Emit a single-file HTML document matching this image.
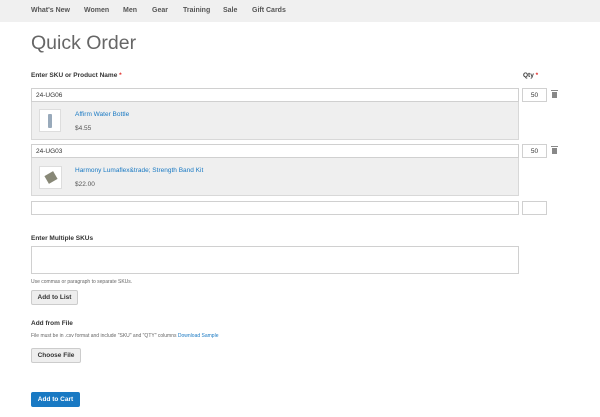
<!DOCTYPE html><html><head><style>
*{box-sizing:border-box;margin:0;padding:0}
body{width:600px;height:417px;background:#fff;font-family:"Liberation Sans",sans-serif;color:#333;position:relative;overflow:hidden}
.a{position:absolute}
.nav{left:0;top:0;width:600px;height:22px;background:#f0f0f0}
.nav span{position:absolute;top:7px;font-size:7px;font-weight:bold;color:#555}
.lbl{font-size:6.5px;font-weight:bold;color:#333}
.in{border:1px solid #d0d0d0;background:#fff;font-size:6.5px;padding-left:4px;line-height:12px}
.box{background:#efefef;border:1px solid #d8d8d8;border-top:none}
.img{background:#fff;border:1px solid #ddd}
.lnk{font-size:6.5px;color:#1979c3}
.pr{font-size:6.5px;color:#555}
.btn{background:#eee;border:1px solid #ccc;border-radius:2px;font-size:6.5px;font-weight:bold;color:#333;text-align:center;line-height:13px}
.star{color:#e02b27}
.tr{position:absolute;width:7px;height:9px}
.tr:before{content:"";position:absolute;left:0;top:1px;width:7px;height:1px;background:#888}
.tr:after{content:"";position:absolute;left:1px;top:3px;width:5px;height:6px;background:#888}
</style></head><body>
<div class="a nav"><span style="left:31px">What's New</span><span style="left:84px">Women</span><span style="left:123px">Men</span><span style="left:152px">Gear</span><span style="left:183px">Training</span><span style="left:223px">Sale</span><span style="left:252px">Gift Cards</span></div>
<div class="a" style="left:31px;top:32px;font-size:19.5px;color:#666">Quick Order</div>
<div class="a lbl" style="left:31px;top:72px">Enter SKU or Product Name <span class="star">*</span></div>
<div class="a lbl" style="left:523px;top:72px">Qty <span class="star">*</span></div>

<div class="a in" style="left:31px;top:88px;width:488px;height:14px;line-height:13px">24-UG06</div>
<div class="a in" style="left:522px;top:88px;width:25px;height:14px;text-align:center;padding:0;line-height:13px">50</div>
<div class="tr" style="left:551px;top:89px"></div>
<div class="a box" style="left:31px;top:102px;width:488px;height:38px"></div>
<div class="a img" style="left:39px;top:109px;width:22px;height:23px"><div style="margin:4px auto;width:4px;height:14px;background:#9ab;border-radius:1px"></div></div>
<div class="a lnk" style="left:75px;top:111px">Affirm Water Bottle</div>
<div class="a pr" style="left:75px;top:125px">$4.55</div>

<div class="a in" style="left:31px;top:144px;width:488px;height:14px;line-height:13px">24-UG03</div>
<div class="a in" style="left:522px;top:144px;width:25px;height:14px;text-align:center;padding:0;line-height:13px">50</div>
<div class="tr" style="left:551px;top:145px"></div>
<div class="a box" style="left:31px;top:158px;width:488px;height:38px"></div>
<div class="a img" style="left:39px;top:166px;width:23px;height:23px"><div style="margin:6px auto;width:10px;height:9px;background:#887;transform:rotate(-30deg)"></div></div>
<div class="a lnk" style="left:75px;top:167px">Harmony Lumaflex&amp;trade; Strength Band Kit</div>
<div class="a pr" style="left:75px;top:181px">$22.00</div>

<div class="a in" style="left:31px;top:201px;width:488px;height:14px"></div>
<div class="a in" style="left:522px;top:201px;width:25px;height:14px"></div>

<div class="a lbl" style="left:31px;top:235px">Enter Multiple SKUs</div>
<div class="a in" style="left:31px;top:246px;width:488px;height:28px"></div>
<div class="a" style="left:31px;top:279px;font-size:5px;color:#666">Use commas or paragraph to separate SKUs.</div>
<div class="a btn" style="left:31px;top:290px;width:47px;height:15px">Add to List</div>
<div class="a lbl" style="left:31px;top:320px">Add from File</div>
<div class="a" style="left:31px;top:333px;font-size:5px;color:#666">File must be in .csv format and include "SKU" and "QTY" columns <span style="color:#1979c3">Download Sample</span></div>
<div class="a btn" style="left:31px;top:348px;width:50px;height:15px">Choose File</div>
<div class="a btn" style="left:31px;top:392px;width:49px;height:15px;background:#1979c3;border-color:#1979c3;color:#fff">Add to Cart</div>
</body></html>
